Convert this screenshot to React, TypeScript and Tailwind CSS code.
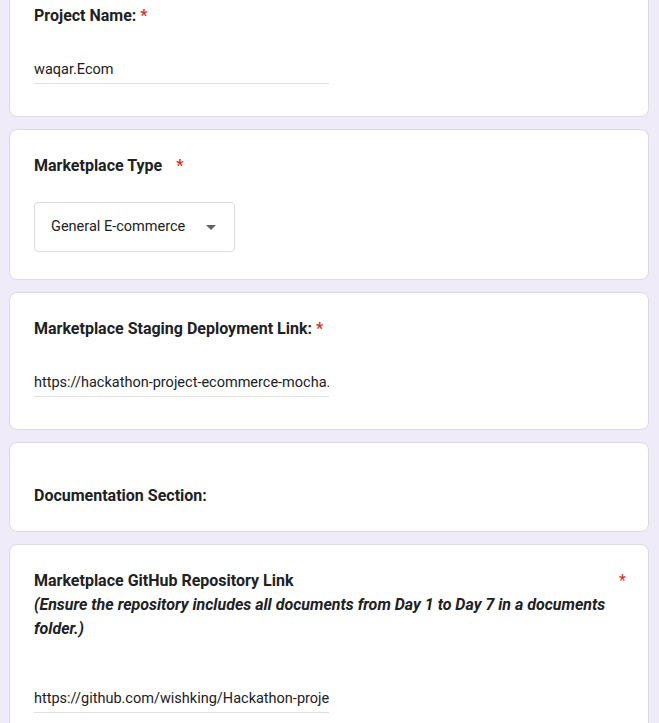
import { ReactNode } from 'react';

function Star({ className = '' }: { className?: string }) {
  return <span className={`text-[#d93025] ${className}`}>*</span>;
}

function Card({ children, className = '' }: { children: ReactNode; className?: string }) {
  return (
    <div className={`bg-white border border-[#dadce0] rounded-lg px-6 ${className}`}>{children}</div>
  );
}

function TextAnswer({ value }: { value: string }) {
  return (
    <div className="w-1/2 mt-8 border-b border-[#e0e0e0] pb-[3px] overflow-hidden whitespace-nowrap text-[14.5px] leading-5 text-[#202124]">
      {value}
    </div>
  );
}

export default function App() {
  return (
    <div
      className="min-h-screen bg-[#f0ebf8] overflow-hidden"
      style={{ fontFamily: 'Roboto, "Liberation Sans", Arial, sans-serif' }}
    >
      <div className="ml-[9px] w-[640px] flex flex-col gap-3 mt-[-21px]">
        {/* Project name */}
        <Card className="pt-6 pb-8">
          <div className="h-6 leading-6 text-[16px] font-bold text-[#202124]">
            Project Name: <Star />
          </div>
          <TextAnswer value="waqar.Ecom" />
        </Card>

        {/* Marketplace type */}
        <Card className="pt-6 pb-[27px]">
          <div className="h-6 leading-6 text-[16px] font-bold text-[#202124]">
            Marketplace Type <Star className="ml-2.5" />
          </div>
          <div className="mt-6 w-[201px] h-[50px] border border-[#dadce0] rounded flex items-center pl-4 pr-[18px] justify-between">
            <span className="text-[14.5px] text-[#202124]">General E-commerce</span>
            <svg width="10" height="5" viewBox="0 0 10 5">
              <path d="M0 0h10L5 5z" fill="#5f6368" />
            </svg>
          </div>
        </Card>

        {/* Staging link */}
        <Card className="pt-6 pb-8">
          <div className="h-6 leading-6 text-[16px] font-bold text-[#202124]">
            Marketplace Staging Deployment Link: <Star />
          </div>
          <TextAnswer value="https://hackathon-project-ecommerce-mocha.vercel.app/" />
        </Card>

        {/* Documentation */}
        <Card className="pt-[41px] pb-[23px]">
          <div className="h-6 leading-6 text-[16px] font-bold text-[#202124]">
            Documentation Section:
          </div>
        </Card>

        {/* GitHub repo */}
        <Card className="pt-6 pb-8">
          <div className="flex justify-between">
            <div className="w-[575px] text-[16px] leading-6 font-bold text-[#202124]">
              <div>Marketplace GitHub Repository Link</div>
              <div className="italic">
                (Ensure the repository includes all documents from Day 1 to Day 7 in a documents folder.)
              </div>
            </div>
            <Star className="leading-6 mr-[-2px]" />
          </div>
          <div className="mt-12">
            <TextAnswer value="https://github.com/wishking/Hackathon-project-ecommerce" />
          </div>
        </Card>
      </div>
    </div>
  );
}
